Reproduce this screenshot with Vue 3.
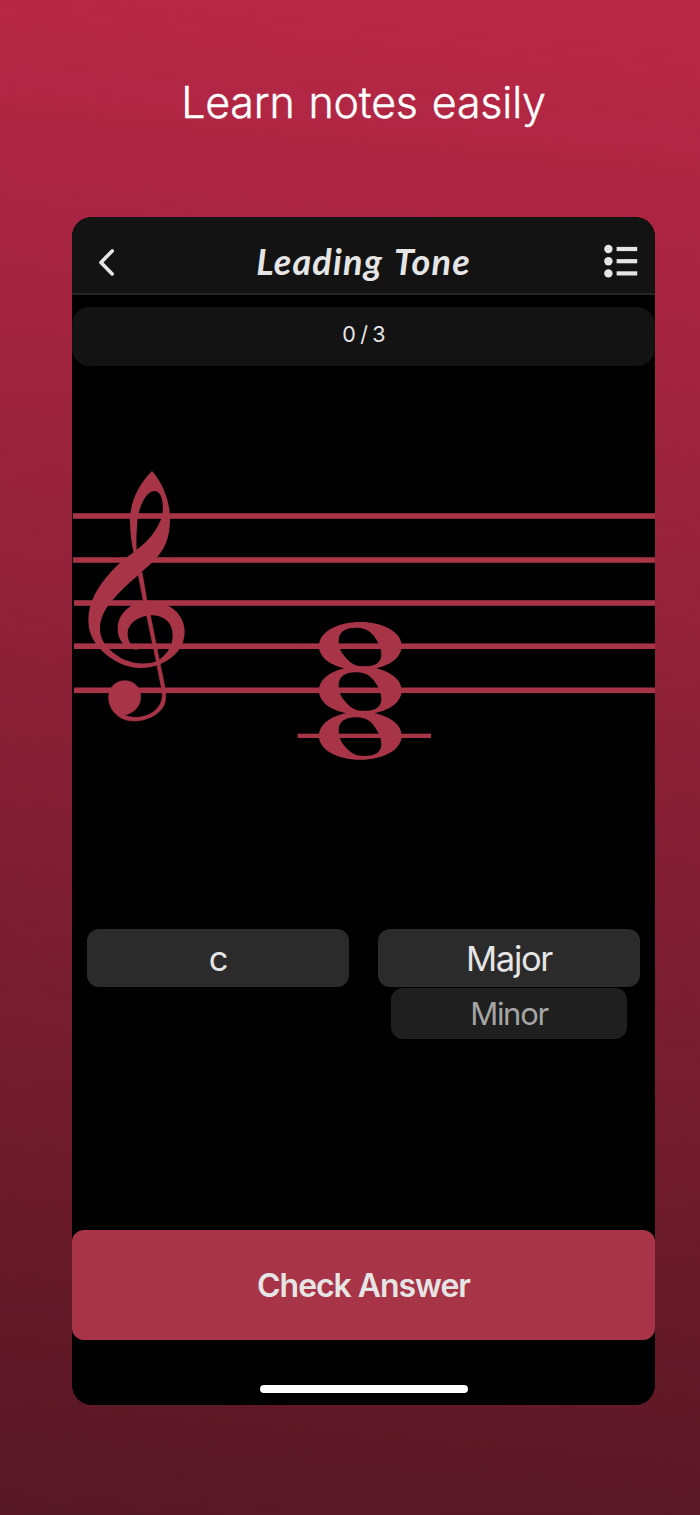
<script setup>
const staffLines = [
  { x: 73, y: 516 },
  { x: 73, y: 560 },
  { x: 74, y: 603 },
  { x: 74, y: 646.2 },
  { x: 74, y: 690.3 },
]
const noteOffsets = [0, 133.5, 269]
const menuRows = [6, 18.2, 30.4]
</script>

<template>
  <main class="page">
    <h1 class="headline"><span>Learn notes easily</span></h1>
    <section class="phone">
      <header class="bar">
        <svg class="back" width="20" height="30" viewBox="0 0 20 30">
          <path d="M16.2 3.9 5 15.4 16.2 26.9" />
        </svg>
        <h2 class="title"><span>Leading Tone</span></h2>
        <svg class="menu" width="34" height="37" viewBox="0 0 34 37">
          <g v-for="y in menuRows" :key="y">
            <circle cx="4.4" :cy="y" r="4.2" />
            <rect x="12.6" :y="y - 2.1" width="20.6" height="4.2" />
          </g>
        </svg>
      </header>

      <div class="progress"><span>0 / 3</span></div>

      <svg class="staff" width="583" height="310" viewBox="72 460 583 310">
        <rect v-for="l in staffLines" :key="l.y" :x="l.x" :y="l.y - 2.8" width="590" height="5.6" />
        <g transform="translate(60 460) scale(.33333)">
          <path
            fill-rule="evenodd"
            d="M276 33C302 62 330 115 330 177C330 232 315 268 282 303C268 316 252 328 236 344C205 370 177 396 155 423C131 452 120 478 120 507C120 548 153 577 190 598C225 613 262 614 290 604C325 582 338 556 338 525C338 490 315 466 274 466C235 468 203 490 203 522C203 545 215 559 237 568C203 573 173 545 173 507C173 458 215 424 270 424C330 424 374 465 374 515C374 558 347 592 303 611C262 629 218 628 178 609C120 579 85 535 85 480C85 427 113 381 150 339C174 312 196 295 221 277C215 250 210 215 210 180C211 125 235 74 276 33ZM283 93C258 93 236 140 232 185C230 214 228 240 230 269C263 246 291 212 304 175C314 140 308 93 283 93Z"
          />
          <path
            class="stem"
            d="M235 345L246 336L261 424L274 480L299 605L315 683C318 700 318 716 314 731C301 765 257 783 222 783C177 783 146 750 146 712C146 682 167 662 194 662C223 662 242 684 242 710C242 739 221 760 193 765C211 773 229 773 247 770C282 763 306 737 307 708C307 699 305 688 303 677L289 605L262 476L250 424Z"
          />
        </g>
        <g transform="translate(280 600) scale(.33333)">
          <path
            v-for="o in noteOffsets"
            :key="o"
            :transform="`translate(0 ${o})`"
            fill-rule="evenodd"
            d="M241 66C309 66 365 96 365 138C365 181 309 210 241 210C172 210 117 181 117 138C117 96 172 66 241 66ZM228 83C194 83 176 97 176 121C176 147 184 158 200 176C215 192 228 199 253 199C287 199 304 187 304 164C304 143 293 123 280 106C266 89 251 83 228 83Z"
          />
          <rect x="53" y="401" width="400" height="13" />
        </g>
      </svg>

      <div class="answers">
        <button class="choice"><span>c</span></button>
        <div class="column">
          <button class="choice"><span>Major</span></button>
          <button class="choice secondary"><span>Minor</span></button>
        </div>
      </div>

      <button class="check"><span>Check Answer</span></button>
      <div class="home"></div>
    </section>
  </main>
</template>

<style>
body { margin: 0; }
</style>

<style scoped>
.page {
  box-sizing: border-box;
  width: 700px;
  height: 1515px;
  padding: 0 45px 0 72px;
  overflow: hidden;
  background: linear-gradient(185deg, #ba2847 0%, #561724 100%);
  font-family: Inter, "Liberation Sans", sans-serif;
}
span { white-space: nowrap; }
.headline {
  margin: 0;
  height: 217px;
  padding-top: 76px;
  box-sizing: border-box;
  text-align: center;
  color: #fff;
  font-size: 43px;
  line-height: 52px;
  font-weight: 300;
  letter-spacing: -0.2px;
  word-spacing: 2px;
  -webkit-text-stroke: 0.4px #fff;
}
.phone {
  display: flex;
  flex-direction: column;
  width: 583px;
  height: 1188px;
  border-radius: 20px;
  overflow: hidden;
  background: #000;
  color: #e6e5e6;
}
.bar {
  box-sizing: border-box;
  height: 78px;
  flex: none;
  display: flex;
  align-items: flex-start;
  justify-content: space-between;
  padding: 26px 17px 0 24px;
  background: #131313;
  border-bottom: 2px solid #232323;
}
.back { margin-top: 4px; fill: none; stroke: #e6e5e6; stroke-width: 3.6; stroke-linecap: round; stroke-linejoin: round; }
.menu { fill: #e6e5e6; }
.title {
  margin: -4px -7px 0 0;
  font: italic 700 36px/44px Lato, sans-serif;
  letter-spacing: 1.2px;
  word-spacing: 3px;
}
.progress {
  flex: none;
  height: 59px;
  margin-top: 12px;
  border-radius: 18px;
  background: #131313;
  text-align: center;
  font-size: 21.5px;
  line-height: 55px;
  letter-spacing: -0.8px;
}
.staff { flex: none; margin-top: 94px; fill: #a83447; }
.stem { stroke: #a83447; stroke-width: 2; }
.answers {
  display: grid;
  grid-template-columns: 262px 262px;
  column-gap: 29px;
  align-items: start;
  margin: 159px 15px 0;
  height: 110px;
}
.column { display: flex; flex-direction: column; align-items: center; gap: 1px; }
button { border: 0; padding: 0; font-family: inherit; color: inherit; }
.choice {
  width: 262px;
  height: 58px;
  border-radius: 12px;
  background: #2b2b2b;
  font-size: 34.5px;
  line-height: 60px;
  letter-spacing: -1.3px;
}
.choice.secondary {
  width: 236px;
  height: 51px;
  background: #1f1f1f;
  color: #a5a5a5;
  font-size: 31px;
  line-height: 51px;
  letter-spacing: -1.3px;
}
.check {
  flex: none;
  height: 110px;
  margin-top: 191px;
  border-radius: 12px;
  background: #a83447;
  font-size: 32px;
  font-weight: 600;
  letter-spacing: -1.05px;
}
.home {
  width: 208px;
  height: 8px;
  border-radius: 4px;
  margin: 45px auto 0;
  background: #fff;
}
</style>
